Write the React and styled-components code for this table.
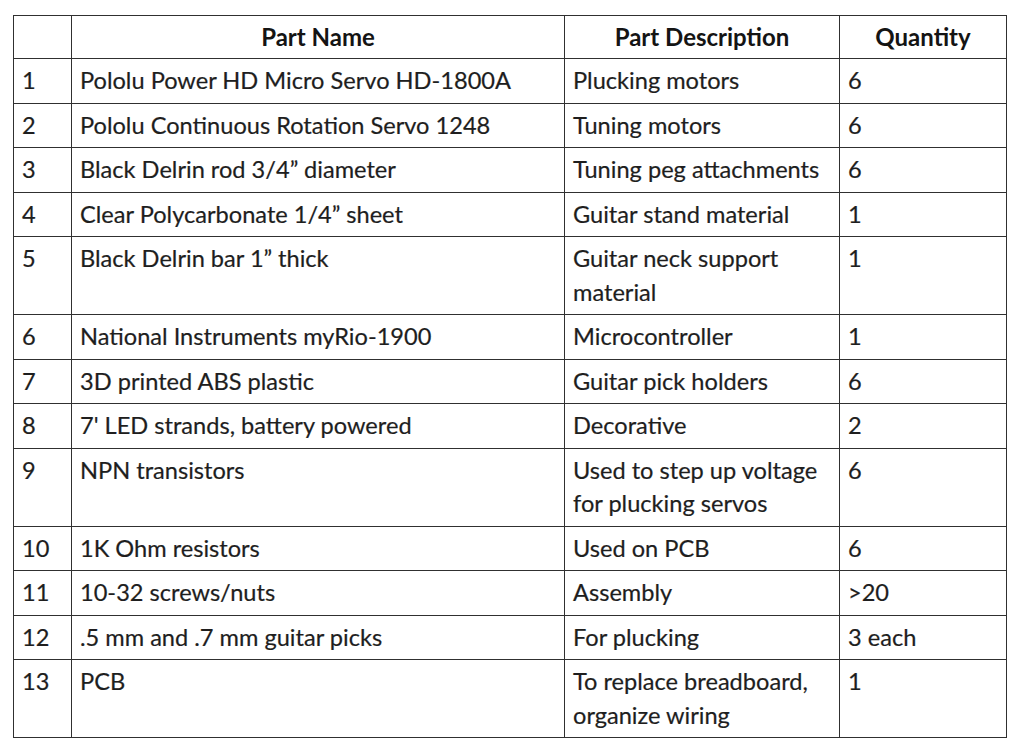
import React from 'react';
import styled, { createGlobalStyle } from 'styled-components';

const GlobalStyle = createGlobalStyle`
  html, body {
    margin: 0;
    padding: 0;
    background: #fff;
  }
`;

const Page = styled.div`
  padding: 15px 0 0 13px;
  width: 1024px;
  height: 752px;
  box-sizing: border-box;
  font-family: Lato, "Open Sans", sans-serif;
  color: #1e1e1e;
`;

const Table = styled.table`
  border-collapse: collapse;
  table-layout: fixed;
  width: 993px;
`;

const Col = styled.col`
  width: ${(p) => p.$w}px;
`;

const HeadCell = styled.th`
  border: 1px solid #303030;
  font-size: 24px;
  font-weight: 700;
  line-height: 33px;
  padding: 4px 8px 5px;
  text-align: center;
  color: #141414;
`;

const Cell = styled.td`
  border: 1px solid #303030;
  font-size: 23.6px;
  line-height: 33.5px;
  padding: 5px 8px;
  vertical-align: top;
  text-align: left;
  -webkit-text-stroke: 0.2px #1e1e1e;
`;

const columns = [58, 493, 275, 167];

const rows = [
  ['1', 'Pololu Power HD Micro Servo HD-1800A', 'Plucking motors', '6'],
  ['2', 'Pololu Continuous Rotation Servo 1248', 'Tuning motors', '6'],
  ['3', 'Black Delrin rod 3/4\u201d diameter', 'Tuning peg attachments', '6'],
  ['4', 'Clear Polycarbonate 1/4\u201d sheet', 'Guitar stand material', '1'],
  ['5', 'Black Delrin bar 1\u201d thick', 'Guitar neck support material', '1'],
  ['6', 'National Instruments myRio-1900', 'Microcontroller', '1'],
  ['7', '3D printed ABS plastic', 'Guitar pick holders', '6'],
  ['8', "7' LED strands, battery powered", 'Decorative', '2'],
  ['9', 'NPN transistors', 'Used to step up voltage for plucking servos', '6'],
  ['10', '1K Ohm resistors', 'Used on PCB', '6'],
  ['11', '10-32 screws/nuts', 'Assembly', '>20'],
  ['12', '.5 mm and .7 mm guitar picks', 'For plucking', '3 each'],
  ['13', 'PCB', 'To replace breadboard, organize wiring', '1'],
];

export default function App() {
  return (
    <>
      <GlobalStyle />
      <Page>
        <Table>
          <colgroup>
            {columns.map((w, i) => (
              <Col key={i} $w={w} />
            ))}
          </colgroup>
          <thead>
            <tr>
              <HeadCell />
              <HeadCell>Part Name</HeadCell>
              <HeadCell>Part Description</HeadCell>
              <HeadCell>Quantity</HeadCell>
            </tr>
          </thead>
          <tbody>
            {rows.map((r) => (
              <tr key={r[0]}>
                {r.map((c, i) => (
                  <Cell key={i}>{c}</Cell>
                ))}
              </tr>
            ))}
          </tbody>
        </Table>
      </Page>
    </>
  );
}
